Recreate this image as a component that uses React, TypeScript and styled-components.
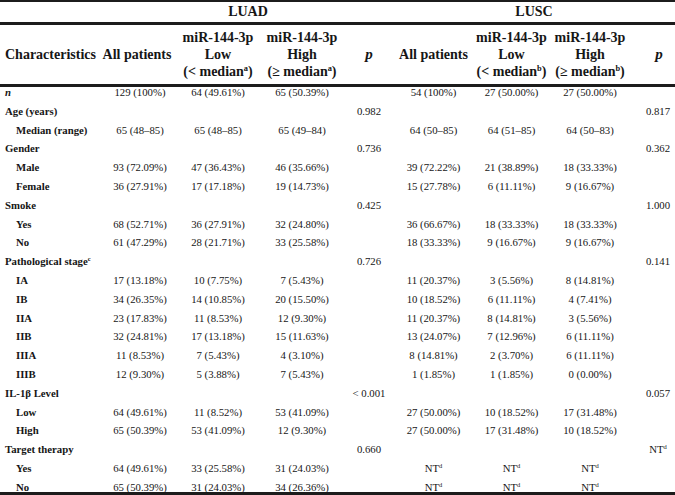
import React from 'react';
import styled, { createGlobalStyle } from 'styled-components';

const GlobalStyle = createGlobalStyle`
  html, body {
    margin: 0;
    padding: 0;
    background: #fff;
  }
  body {
    font-family: "Liberation Serif", "Times New Roman", serif;
    color: #161616;
  }
`;

const COLS = '103px 74px 82px 86px 48px 81px 75px 82px 44px';

const Table = styled.div`
  width: 675px;
`;

const SpanRow = styled.div`
  display: grid;
  grid-template-columns: 103px 290px 282px;
  height: 20px;
  align-items: center;
  border-top: 2px solid #1c1c1c;
  border-bottom: 3px solid #1c1c1c;
  font-size: 14px;
  font-weight: bold;
  text-align: center;
`;

const HeadRow = styled.div`
  display: grid;
  grid-template-columns: ${COLS};
  height: 59px;
  align-items: center;
  border-bottom: 3px solid #1c1c1c;
  font-size: 14px;
  font-weight: bold;
  line-height: 17px;
  text-align: center;
`;

const HeadCell = styled.div<{ $left?: boolean; $shift?: number }>`
  text-align: ${p => (p.$left ? 'left' : 'center')};
  padding-left: ${p => (p.$left ? 5 : 0)}px;
  transform: translateX(${p => p.$shift || 0}px);
  white-space: nowrap;
`;

const PHead = styled.em`
  font-style: italic;
  font-size: 15px;
`;

const Body = styled.div`
  border-bottom: 4px solid #1c1c1c;
`;

const BodyRow = styled.div`
  display: grid;
  grid-template-columns: ${COLS};
  font-size: 10.75px;
  line-height: 10px;
  padding-bottom: 8.8px;
  &:last-child {
    padding-bottom: 0;
  }
`;

const Label = styled.div<{ $sub?: boolean; $italic?: boolean }>`
  font-weight: bold;
  font-style: ${p => (p.$italic ? 'italic' : 'normal')};
  padding-left: ${p => (p.$sub ? 16 : 5)}px;
  white-space: nowrap;
`;

const Cell = styled.div<{ $shift?: number }>`
  text-align: center;
  white-space: nowrap;
  transform: translateX(${p => p.$shift || 0}px);
`;

const Sup = styled.sup`
  font-size: 0.6em;
  line-height: 0;
  vertical-align: 0.55em;
`;

type Row = {
  label: string;
  sub?: boolean;
  italic?: boolean;
  sup?: string;
  cells: string[];
};

const rows: Row[] = [
  { label: 'n', italic: true, cells: ['129 (100%)', '64 (49.61%)', '65 (50.39%)', '', '54 (100%)', '27 (50.00%)', '27 (50.00%)', ''] },
  { label: 'Age (years)', cells: ['', '', '', '0.982', '', '', '', '0.817'] },
  { label: 'Median (range)', sub: true, cells: ['65 (48–85)', '65 (48–85)', '65 (49–84)', '', '64 (50–85)', '64 (51–85)', '64 (50–83)', ''] },
  { label: 'Gender', cells: ['', '', '', '0.736', '', '', '', '0.362'] },
  { label: 'Male', sub: true, cells: ['93 (72.09%)', '47 (36.43%)', '46 (35.66%)', '', '39 (72.22%)', '21 (38.89%)', '18 (33.33%)', ''] },
  { label: 'Female', sub: true, cells: ['36 (27.91%)', '17 (17.18%)', '19 (14.73%)', '', '15 (27.78%)', '6 (11.11%)', '9 (16.67%)', ''] },
  { label: 'Smoke', cells: ['', '', '', '0.425', '', '', '', '1.000'] },
  { label: 'Yes', sub: true, cells: ['68 (52.71%)', '36 (27.91%)', '32 (24.80%)', '', '36 (66.67%)', '18 (33.33%)', '18 (33.33%)', ''] },
  { label: 'No', sub: true, cells: ['61 (47.29%)', '28 (21.71%)', '33 (25.58%)', '', '18 (33.33%)', '9 (16.67%)', '9 (16.67%)', ''] },
  { label: 'Pathological stage', sup: 'c', cells: ['', '', '', '0.726', '', '', '', '0.141'] },
  { label: 'IA', sub: true, cells: ['17 (13.18%)', '10 (7.75%)', '7 (5.43%)', '', '11 (20.37%)', '3 (5.56%)', '8 (14.81%)', ''] },
  { label: 'IB', sub: true, cells: ['34 (26.35%)', '14 (10.85%)', '20 (15.50%)', '', '10 (18.52%)', '6 (11.11%)', '4 (7.41%)', ''] },
  { label: 'IIA', sub: true, cells: ['23 (17.83%)', '11 (8.53%)', '12 (9.30%)', '', '11 (20.37%)', '8 (14.81%)', '3 (5.56%)', ''] },
  { label: 'IIB', sub: true, cells: ['32 (24.81%)', '17 (13.18%)', '15 (11.63%)', '', '13 (24.07%)', '7 (12.96%)', '6 (11.11%)', ''] },
  { label: 'IIIA', sub: true, cells: ['11 (8.53%)', '7 (5.43%)', '4 (3.10%)', '', '8 (14.81%)', '2 (3.70%)', '6 (11.11%)', ''] },
  { label: 'IIIB', sub: true, cells: ['12 (9.30%)', '5 (3.88%)', '7 (5.43%)', '', '1 (1.85%)', '1 (1.85%)', '0 (0.00%)', ''] },
  { label: 'IL-1β Level', cells: ['', '', '', '< 0.001', '', '', '', '0.057'] },
  { label: 'Low', sub: true, cells: ['64 (49.61%)', '11 (8.52%)', '53 (41.09%)', '', '27 (50.00%)', '10 (18.52%)', '17 (31.48%)', ''] },
  { label: 'High', sub: true, cells: ['65 (50.39%)', '53 (41.09%)', '12 (9.30%)', '', '27 (50.00%)', '17 (31.48%)', '10 (18.52%)', ''] },
  { label: 'Target therapy', cells: ['', '', '', '0.660', '', '', '', 'NT^d'] },
  { label: 'Yes', sub: true, cells: ['64 (49.61%)', '33 (25.58%)', '31 (24.03%)', '', 'NT^d', 'NT^d', 'NT^d', ''] },
  { label: 'No', sub: true, cells: ['65 (50.39%)', '31 (24.03%)', '34 (26.36%)', '', 'NT^d', 'NT^d', 'NT^d', ''] },
];

// "NT^d" -> NT with superscript d
const renderValue = (v: string) => {
  const [main, sup] = v.split('^');
  return sup ? <>{main}<Sup>{sup}</Sup></> : main;
};

const GroupHead = ({ level, sign, mark }: { level: string; sign: string; mark: string }) => (
  <>
    miR-144-3p<br />
    {level}<br />
    ({sign} median<Sup>{mark}</Sup>)
  </>
);

export default function App() {
  return (
    <Table>
      <GlobalStyle />
      <SpanRow>
        <div />
        <div>LUAD</div>
        <div>LUSC</div>
      </SpanRow>
      <HeadRow>
        <HeadCell $left>Characteristics</HeadCell>
        <HeadCell $shift={-3}>All patients</HeadCell>
        <HeadCell><GroupHead level="Low" sign="<" mark="a" /></HeadCell>
        <HeadCell><GroupHead level="High" sign="≥" mark="a" /></HeadCell>
        <HeadCell><PHead>p</PHead></HeadCell>
        <HeadCell>All patients</HeadCell>
        <HeadCell><GroupHead level="Low" sign="<" mark="b" /></HeadCell>
        <HeadCell><GroupHead level="High" sign="≥" mark="b" /></HeadCell>
        <HeadCell $shift={6}><PHead>p</PHead></HeadCell>
      </HeadRow>
      <Body>
        {rows.map((r, i) => (
          <BodyRow key={i}>
            <Label $sub={r.sub} $italic={r.italic}>
              {r.label}
              {r.sup && <Sup>{r.sup}</Sup>}
            </Label>
            {r.cells.map((c, j) => (
              <Cell key={j} $shift={j === 7 ? 5 : 0}>{renderValue(c)}</Cell>
            ))}
          </BodyRow>
        ))}
      </Body>
    </Table>
  );
}
